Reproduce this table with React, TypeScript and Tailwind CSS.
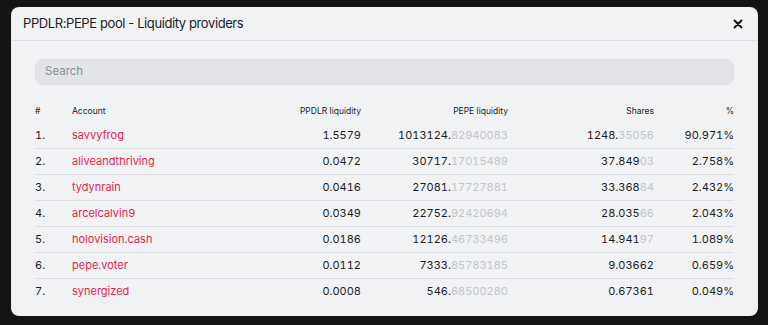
import React from 'react';

type Row = {
  account: string;
  ppdlr: string;
  pepe: [string, string];
  shares: [string, string];
  pct: string;
};

const rows: Row[] = [
  { account: 'savvyfrog', ppdlr: '1.5579', pepe: ['1013124.', '82940083'], shares: ['1248.', '35056'], pct: '90.971%' },
  { account: 'aliveandthriving', ppdlr: '0.0472', pepe: ['30717.', '17015489'], shares: ['37.849', '03'], pct: '2.758%' },
  { account: 'tydynrain', ppdlr: '0.0416', pepe: ['27081.', '17727881'], shares: ['33.368', '84'], pct: '2.432%' },
  { account: 'arcelcalvin9', ppdlr: '0.0349', pepe: ['22752.', '92420694'], shares: ['28.035', '66'], pct: '2.043%' },
  { account: 'holovision.cash', ppdlr: '0.0186', pepe: ['12126.', '46733496'], shares: ['14.941', '97'], pct: '1.089%' },
  { account: 'pepe.voter', ppdlr: '0.0112', pepe: ['7333.', '85783185'], shares: ['9.03662', ''], pct: '0.659%' },
  { account: 'synergized', ppdlr: '0.0008', pepe: ['546.', '68500280'], shares: ['0.67361', ''], pct: '0.049%' },
];

const Split: React.FC<{ v: [string, string] }> = ({ v }) => (
  <>
    {v[0]}
    <span className="text-[#c3c6cc]">{v[1]}</span>
  </>
);

export default function App() {
  return (
    <div className="min-h-[325px] bg-[#141414] pt-[7px] pl-[11px]" style={{ fontFamily: 'Inter, "Liberation Sans", sans-serif' }}>
      <div className="w-[747px] h-[309px] rounded-lg bg-[#f1f2f4] overflow-hidden">
        <div className="flex items-center justify-between h-[34px] px-3 border-b border-[#dfe0e3]">
          <h2 className="text-[13px] tracking-[-0.4px] text-[#1c1c1e] pt-px">PPDLR:PEPE pool - Liquidity providers</h2>
          <button className="text-[#111] mr-[3px]">
            <svg width="10" height="10" viewBox="0 0 10 10" fill="none" stroke="currentColor" strokeWidth="2" strokeLinecap="round">
              <path d="M1.5 1.5l7 7M8.5 1.5l-7 7" />
            </svg>
          </button>
        </div>
        <div className="px-6 pt-[18px]">
          <div className="h-[26px] rounded-lg bg-[#e2e4e7] border border-[#dcdee2] flex items-center px-[9px] text-[11.5px] text-[#8c8f95]">
            Search
          </div>
          <table className="w-full mt-[15px] text-[11px] text-[#1d1d1f] border-collapse">
            <thead>
              <tr className="text-[8.5px] text-[#222] h-[22px]">
                <th className="text-left font-normal w-[37px]">#</th>
                <th className="text-left font-normal">Account</th>
                <th className="text-right font-normal w-[140px]">PPDLR liquidity</th>
                <th className="text-right font-normal w-[147px]">PEPE liquidity</th>
                <th className="text-right font-normal w-[146px]">Shares</th>
                <th className="text-right font-normal w-[80px]">%</th>
              </tr>
            </thead>
            <tbody className="tabular-nums">
              {rows.map((r, i) => (
                <tr key={r.account} className={i < rows.length - 1 ? 'h-[26px] border-b border-[#dcdde1]' : 'h-[26px]'}>
                  <td>{i + 1}.</td>
                  <td className="text-[#e0264f]">{r.account}</td>
                  <td className="text-right">{r.ppdlr}</td>
                  <td className="text-right"><Split v={r.pepe} /></td>
                  <td className="text-right"><Split v={r.shares} /></td>
                  <td className="text-right">{r.pct}</td>
                </tr>
              ))}
            </tbody>
          </table>
        </div>
      </div>
    </div>
  );
}
